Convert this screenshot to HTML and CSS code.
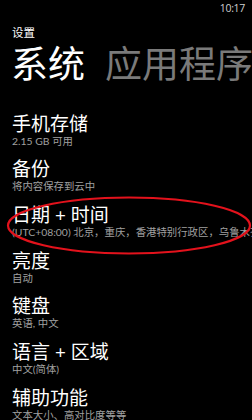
FILE: index.html
```html
<!DOCTYPE html>
<html lang="zh-CN">
<head>
<meta charset="utf-8">
<link rel="stylesheet" href="styles.css">
</head>
<body>
<div class="screen">
  <div class="status">10:17</div>
  <div class="app-title">设置</div>
  <div class="pivot">
    <span class="pivot-item active">系统</span>
    <span class="pivot-item">应用程序</span>
  </div>
  <ul class="list">
    <li class="item"><div class="title">手机存储</div><div class="sub">2.15 GB 可用</div></li>
    <li class="item"><div class="title">备份</div><div class="sub">将内容保存到云中</div></li>
    <li class="item"><div class="title">日期 + 时间</div><div class="sub">(UTC+08:00) 北京，重庆，香港特别行政区，乌鲁木齐</div></li>
    <li class="item"><div class="title">亮度</div><div class="sub">自动</div></li>
    <li class="item"><div class="title">键盘</div><div class="sub">英语, 中文</div></li>
    <li class="item"><div class="title">语言 + 区域</div><div class="sub">中文(简体)</div></li>
    <li class="item"><div class="title">辅助功能</div><div class="sub">文本大小、高对比度等等</div></li>
  </ul>
  <svg class="mark" width="252" height="420" viewBox="0 0 252 420">
    <ellipse cx="129" cy="225.5" rx="121" ry="28" fill="none" stroke="#e3121c" stroke-width="2.2"/>
  </svg>
</div>
</body>
</html>
```
FILE: styles.css
```css
html, body {
  margin: 0;
  padding: 0;
  background: #000;
}
body {
  font-family: "Open Sans", "Noto Sans CJK SC", sans-serif;
  color: #fff;
  width: 252px;
  height: 420px;
  overflow: hidden;
}
.screen {
  position: relative;
  width: 252px;
  height: 420px;
  overflow: hidden;
}
.status {
  height: 16px;
  line-height: 16px;
  font-size: 10.5px;
  color: #d0d0d0;
  text-align: right;
  padding-right: 7px;
  letter-spacing: -0.3px;
}
.app-title {
  margin-top: 8px;
  padding-left: 12px;
  font-size: 11.5px;
  line-height: 18px;
  color: #fff;
}
.pivot {
  padding-left: 11px;
  white-space: nowrap;
  overflow: hidden;
  font-size: 37px;
  line-height: 44px;
  display: flex;
  gap: 20px;
}
.pivot-item {
  color: #7a7a7a;
  flex: none;
}
.pivot-item.active {
  color: #fff;
}
.list {
  list-style: none;
  margin: 0;
  padding: 0 0 0 12px;
  margin-top: 26.5px;
}
.item {
  height: 45.7px;
}
.title {
  font-size: 19px;
  line-height: 22px;
  color: #fff;
  white-space: nowrap;
}
.sub {
  font-family: "Lato", "Noto Sans CJK SC", sans-serif;
  font-size: 10.4px;
  line-height: 13px;
  color: #a0a0a0;
  white-space: nowrap;
}
.mark {
  position: absolute;
  left: 0;
  top: 0;
  pointer-events: none;
}
```
